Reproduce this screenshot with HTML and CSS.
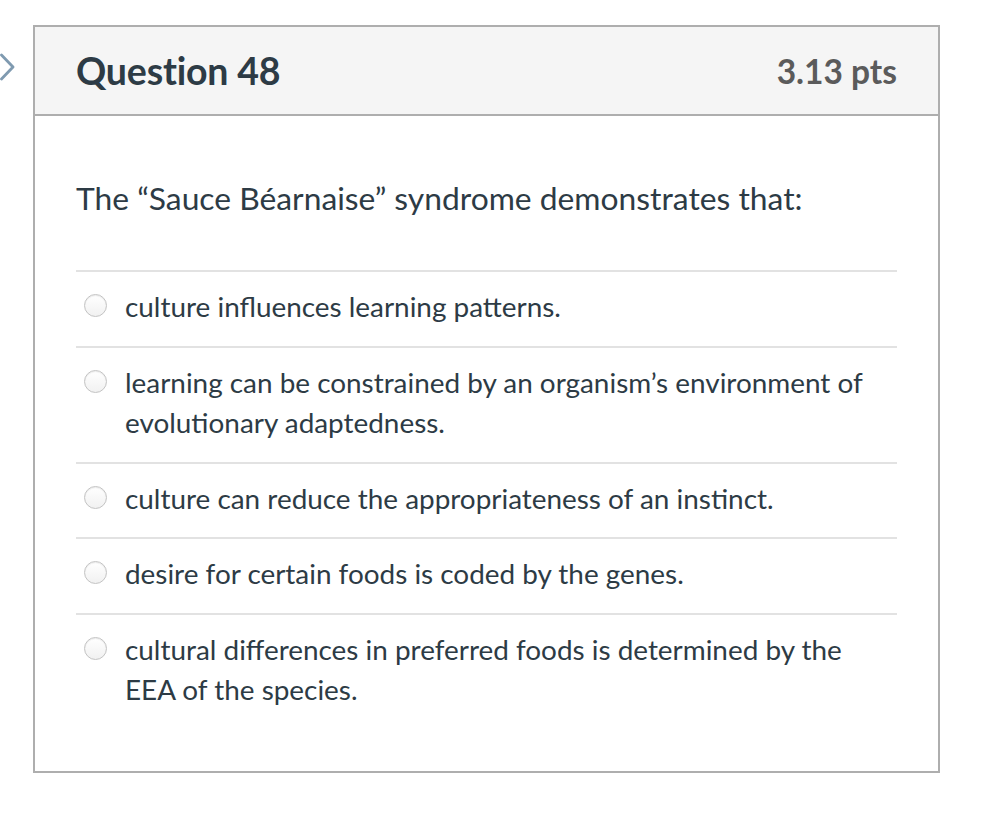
FILE: index.html
```html
<!DOCTYPE html>
<html>
<head>
<meta charset="utf-8">
<link rel="stylesheet" href="styles.css">
</head>
<body>
<div class="page">
  <svg class="flag" width="16" height="30" viewBox="0 0 16 30"><path d="M1.5 3 L13 15 L1.5 27" fill="none" stroke="#7f9ab0" stroke-width="2.8" stroke-linejoin="round" stroke-linecap="round"/></svg>
  <div class="question">
    <div class="header">
      <h2 class="title">Question 48</h2>
      <div class="pts">3.13 pts</div>
    </div>
    <div class="body">
      <p class="text">The “Sauce Béarnaise” syndrome demonstrates that:</p>
      <ul class="answers">
        <li class="answer"><span class="radio"></span><span class="label">culture influences learning patterns.</span></li>
        <li class="answer"><span class="radio"></span><span class="label">learning can be constrained by an organism’s environment of evolutionary adaptedness.</span></li>
        <li class="answer"><span class="radio"></span><span class="label">culture can reduce the appropriateness of an instinct.</span></li>
        <li class="answer"><span class="radio"></span><span class="label">desire for certain foods is coded by the genes.</span></li>
        <li class="answer"><span class="radio"></span><span class="label">cultural differences in preferred foods is determined by the EEA of the species.</span></li>
      </ul>
    </div>
  </div>
</div>
</body>
</html>
```
FILE: styles.css
```css
html, body {
  margin: 0;
  padding: 0;
  background: #fff;
}
body {
  font-family: Lato, "Open Sans", sans-serif;
  color: #2d3b45;
}
.page {
  position: relative;
  padding: 25px 0 0 33px;
}
.flag {
  position: absolute;
  left: 0;
  top: 52px;
}
.question {
  border: 2px solid #aeaeae;
  box-sizing: border-box;
  width: 907px;
}
.header {
  display: flex;
  justify-content: space-between;
  align-items: center;
  background: #f5f5f5;
  border-bottom: 2px solid #aeaeae;
  height: 89px;
  padding: 0 41px 0 41px;
  box-sizing: border-box;
}
.title {
  margin: 0;
  font-size: 37.5px;
  font-weight: 700;
  color: #2d3b45;
  letter-spacing: -0.2px;
}
.pts {
  font-size: 33.5px;
  font-weight: 700;
  color: #5b5b5b;
}
.body {
  padding: 62px 41px 42px 41px;
}
.text {
  margin: 0 0 52px 0;
  font-size: 31.8px;
  line-height: 40px;
}
.answers {
  list-style: none;
  margin: 0;
  padding: 0;
  border-top: 2px solid #e2e2e2;
}
.answer {
  display: flex;
  align-items: flex-start;
  border-bottom: 2px solid #e2e2e2;
  padding: 14px 0 19.75px 8px;
}
.answer:last-child {
  border-bottom: none;
}
.radio {
  flex: none;
  width: 21px;
  height: 21px;
  border: 1px solid #c3c3c3;
  border-radius: 50%;
  background: linear-gradient(#fff, #f1f1f1);
  box-shadow: inset 0 1px 1px rgba(0,0,0,0.08);
  margin: 8px 18px 0 0;
}
.label {
  font-size: 27.9px;
  line-height: 40px;
  color: #2d3b45;
  max-width: 760px;
}
```
